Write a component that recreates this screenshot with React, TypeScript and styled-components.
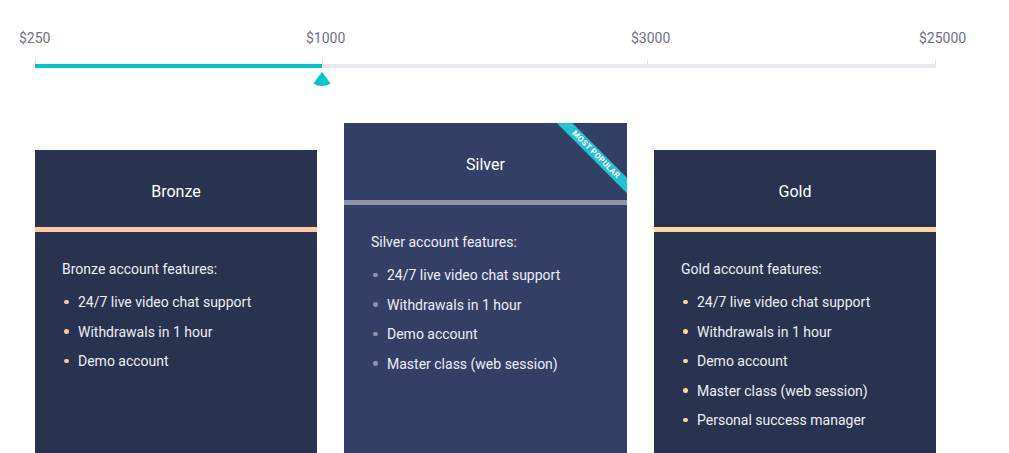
import styled, { createGlobalStyle } from "styled-components";

const GlobalStyle = createGlobalStyle`
  html, body {
    margin: 0;
    padding: 0;
    background: #ffffff;
    overflow: hidden;
  }
  body {
    font-family: Roboto, "Liberation Sans", sans-serif;
  }
`;

// tick positions along the 901px track
const marks = [
  { label: "$250", pos: 0 },
  { label: "$1000", pos: 287 },
  { label: "$3000", pos: 612 },
  { label: "$25000", pos: 900 },
];

const selected = 287;

const plans = [
  {
    name: "Bronze",
    accent: "#fbc9a6",
    bg: "#29324e",
    featured: false,
    features: [
      "24/7 live video chat support",
      "Withdrawals in 1 hour",
      "Demo account",
    ],
  },
  {
    name: "Silver",
    accent: "#8f93a9",
    bg: "#343f66",
    featured: true,
    features: [
      "24/7 live video chat support",
      "Withdrawals in 1 hour",
      "Demo account",
      "Master class (web session)",
    ],
  },
  {
    name: "Gold",
    accent: "#fad99f",
    bg: "#29324e",
    featured: false,
    features: [
      "24/7 live video chat support",
      "Withdrawals in 1 hour",
      "Demo account",
      "Master class (web session)",
      "Personal success manager",
    ],
  },
];

function App() {
  return (
    <Page>
      <GlobalStyle />
      <Scale>
        <MarkRow>
          {marks.map((m) => (
            <Mark key={m.label} style={{ left: m.pos - 16 }}>
              <MarkLabel>{m.label}</MarkLabel>
              <Tick />
            </Mark>
          ))}
        </MarkRow>
        <Track>
          <Fill style={{ width: selected }}>
            <Handle>
              <svg width="18" height="17" viewBox="0 0 18 17">
                <path
                  d="M9 0 L0.4 11.4 A15.5 15.5 0 0 0 17.6 11.4 Z"
                  fill="#00c4d0"
                />
              </svg>
            </Handle>
          </Fill>
        </Track>
      </Scale>
      <Plans>
        {plans.map((plan) => (
          <Card key={plan.name} $bg={plan.bg} $featured={plan.featured}>
            {plan.featured && <Ribbon>MOST POPULAR</Ribbon>}
            <CardHead $accent={plan.accent}>{plan.name}</CardHead>
            <CardBody>
              <BodyTitle>{plan.name} account features:</BodyTitle>
              <FeatureList>
                {plan.features.map((f) => (
                  <Feature key={f} $bullet={plan.accent}>
                    {f}
                  </Feature>
                ))}
              </FeatureList>
            </CardBody>
          </Card>
        ))}
      </Plans>
    </Page>
  );
}

export default App;

const Page = styled.div`
  width: 901px;
  padding: 0 35px;
`;

const Scale = styled.div`
  height: 123px;
  padding-top: 29px;
  box-sizing: border-box;
`;

const MarkRow = styled.div`
  position: relative;
  height: 35px;
`;

const Mark = styled.div`
  position: absolute;
  top: 0;
  display: flex;
  flex-direction: column;
`;

const MarkLabel = styled.span`
  font-size: 14px;
  line-height: 18px;
  color: #6f7384;
  white-space: nowrap;
`;

const Tick = styled.span`
  width: 1px;
  height: 5px;
  margin: 12px 0 0 16px;
  background: #e3e4ea;
`;

const Track = styled.div`
  height: 4px;
  background: #e8e9ee;
`;

const Fill = styled.div`
  position: relative;
  height: 100%;
  background: #00c4d0;
`;

const Handle = styled.div`
  position: absolute;
  top: 8px;
  right: -9px;
  width: 18px;
  height: 17px;
  svg {
    display: block;
  }
`;

const Plans = styled.div`
  display: flex;
  gap: 27px;
  align-items: flex-start;
`;

const Card = styled.div<{ $bg: string; $featured: boolean }>`
  position: relative;
  overflow: hidden;
  width: ${(p) => (p.$featured ? "283px" : "282px")};
  margin-top: ${(p) => (p.$featured ? "0" : "27px")};
  background: ${(p) => p.$bg};
  color: #eceef4;
`;

const Ribbon = styled.div`
  position: absolute;
  top: 26px;
  left: 196px;
  width: 112px;
  height: 11px;
  line-height: 11px;
  background: #1fc3d2;
  color: #ffffff;
  font-size: 8px;
  font-weight: 700;
  letter-spacing: 0.3px;
  text-align: center;
  transform: rotate(45deg);
`;

const CardHead = styled.div<{ $accent: string }>`
  height: 82px;
  padding-top: 6px;
  box-sizing: border-box;
  display: flex;
  align-items: center;
  justify-content: center;
  font-size: 16px;
  color: #ffffff;
  border-bottom: 5px solid ${(p) => p.$accent};
`;

const CardBody = styled.div`
  padding: 27px 27px 30px;
  min-height: 240px;
`;

const BodyTitle = styled.div`
  font-size: 14px;
  line-height: 20px;
  margin-bottom: 13px;
`;

const FeatureList = styled.ul`
  list-style: none;
  margin: 0;
  padding: 0;
  display: flex;
  flex-direction: column;
  gap: 9.5px;
`;

const Feature = styled.li<{ $bullet: string }>`
  display: flex;
  align-items: center;
  font-size: 14px;
  line-height: 20px;
  &::before {
    content: "";
    width: 4.5px;
    height: 4.5px;
    border-radius: 50%;
    background: ${(p) => p.$bullet};
    margin: 0 9.5px 0 2px;
    flex-shrink: 0;
  }
`;
